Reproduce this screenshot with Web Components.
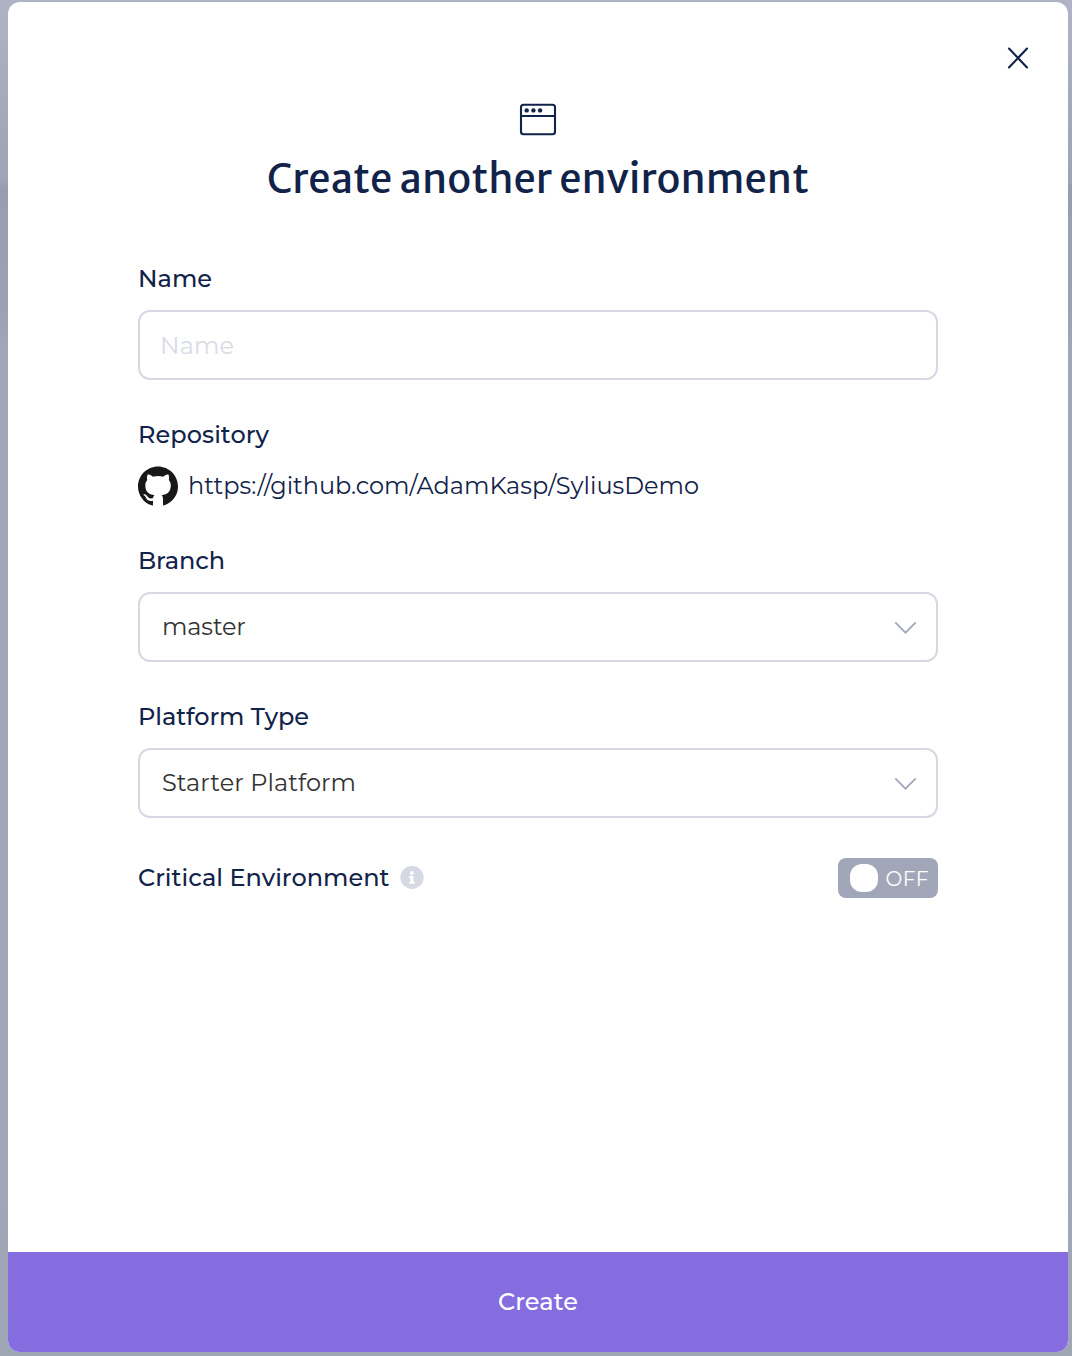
<!DOCTYPE html>
<html lang="en">
<head>
<meta charset="utf-8">
<title>Create another environment</title>
<style>
html,body{margin:0;height:100%;overflow:hidden}
body{font-family:Montserrat,Inter,"Liberation Sans",sans-serif;color:#12234a;font-size:24px}
</style>
</head>
<body>
<env-modal>
  <env-header><fit-text slot="title" width="542">Create another environment</fit-text></env-header>
  <env-form>
    <env-field><fit-text slot="label" width="74">Name</fit-text><env-input><fit-text width="74">Name</fit-text></env-input></env-field>
    <env-field><fit-text slot="label" width="131">Repository</fit-text><env-repo><fit-text width="511">https://github.com/AdamKasp/SyliusDemo</fit-text></env-repo></env-field>
    <env-field><fit-text slot="label" width="87">Branch</fit-text><env-select><fit-text width="84">master</fit-text></env-select></env-field>
    <env-field><fit-text slot="label" width="171">Platform Type</fit-text><env-select><fit-text width="194">Starter Platform</fit-text></env-select></env-field>
    <env-toggle-row><fit-text slot="label" width="251.5">Critical Environment</fit-text><env-toggle slot="control"><fit-text width="43">OFF</fit-text></env-toggle></env-toggle-row>
  </env-form>
  <env-submit slot="footer"><fit-text width="80">Create</fit-text></env-submit>
</env-modal>
<script>
const define = (name, html, ready) => customElements.define(name, class extends HTMLElement {
  constructor() {
    super();
    this.attachShadow({mode: 'open'}).innerHTML = html;
  }
  connectedCallback() { if (ready) ready(this); }
});

define('env-modal', `<style>
:host{box-sizing:border-box;display:block;width:1072px;height:1356px;padding:2px 4px 4px 8px;
background:linear-gradient(180deg,#b0b3c3 0,#a6abbb 90px,#9ea3b5 182px,#989eb0 186px,#9ca1b3 320px,#a1a6b8 350px,#a1a6b8 1180px,#9fa6b4 100%)}
.card{display:flex;flex-direction:column;height:1350px;border-radius:12px;background:#fff;overflow:hidden}
.body{flex:1}
</style><div class="card"><div class="body"><slot></slot></div><slot name="footer"></slot></div>`);

define('env-header', `<style>
:host{display:flex;flex-direction:column;align-items:center}
.close{align-self:flex-end;display:block;margin:44px 38px 0 0}
.win{display:block;margin-top:32px}
h1{margin:17px 0 0;font:500 40px/52px "Merriweather Sans","Open Sans","Noto Sans",sans-serif;white-space:nowrap}
</style>
<svg class="close" width="24" height="24" viewBox="0 0 24 24" fill="none" stroke="#12234a" stroke-width="2.1" stroke-linecap="round"><path d="M3 2.5 21 21.5M21 2.5 3 21.5"/></svg>
<svg class="win" width="38" height="34" viewBox="0 0 38 34" fill="none" stroke="#12234a" stroke-width="2.1"><rect x="2" y="2.8" width="34" height="29.4" rx="2.5"/><path d="M2 14h34"/><g fill="#12234a" stroke="none"><circle cx="7.7" cy="8.4" r="2.2"/><circle cx="14.4" cy="8.4" r="2.2"/><circle cx="21.1" cy="8.4" r="2.2"/></g></svg>
<h1><slot name="title"></slot></h1>`);

define('env-form', `<style>
:host{display:flex;flex-direction:column;gap:40px;width:800px;margin:59px auto 0}
</style><slot></slot>`);

define('env-field', `<style>
:host{display:flex;flex-direction:column;gap:16px}
label{height:30px;line-height:30px;font-weight:500}
</style><label><slot name="label"></slot></label><slot></slot>`);

define('env-input', `<style>
:host{box-sizing:border-box;display:flex;align-items:center;height:70px;padding:1px 20px 0;border:2px solid #d6d8e3;border-radius:12px;color:#d9dbe5;font-weight:400}
</style><slot></slot>`);

define('env-select', `<style>
:host{box-sizing:border-box;display:flex;align-items:center;justify-content:space-between;height:70px;padding:0 18px 0 22px;border:2px solid #d6d8e3;border-radius:12px;color:#333;font-weight:400}
span{padding-bottom:2px}
svg{display:block}
</style><span><slot></slot></span><svg width="25" height="16" viewBox="0 0 25 16" fill="none" stroke="#a1a6b8" stroke-width="1.7"><path d="M2.3 3.3 12.5 13.7 22.7 3.3"/></svg>`);

define('env-repo', `<style>
:host{display:flex;align-items:center;gap:10px;height:40px;font-weight:400}
span{padding-bottom:2px}
svg{display:block;flex:none}
</style><svg width="40" height="40" viewBox="0 -.15 16 16" fill="#191717"><path d="M8 0C3.58 0 0 3.58 0 8c0 3.54 2.29 6.53 5.47 7.59.4.07.55-.17.55-.38 0-.19-.01-.82-.01-1.49-2.01.37-2.53-.49-2.69-.94-.09-.23-.48-.94-.82-1.13-.28-.15-.68-.52-.01-.53.63-.01 1.08.58 1.23.82.72 1.21 1.87.87 2.33.66.07-.52.28-.87.51-1.07-1.78-.2-3.64-.89-3.64-3.95 0-.87.31-1.59.82-2.15-.08-.2-.36-1.02.08-2.12 0 0 .67-.21 2.2.82.64-.18 1.32-.27 2-.27s1.36.09 2 .27c1.53-1.04 2.2-.82 2.2-.82.44 1.1.16 1.92.08 2.12.51.56.82 1.27.82 2.15 0 3.07-1.87 3.75-3.65 3.95.29.25.54.73.54 1.48 0 1.07-.01 1.93-.01 2.2 0 .21.15.46.55.38A8.01 8.01 0 0 0 16 8c0-4.42-3.58-8-8-8z"/></svg><span><slot></slot></span>`);

define('env-toggle-row', `<style>
:host{display:flex;align-items:center;justify-content:space-between;height:40px}
.label{display:flex;align-items:center;gap:10px;font-weight:500}
span{padding-bottom:2px}
svg{display:block}
</style><div class="label"><span><slot name="label"></slot></span><svg width="24" height="24" viewBox="0 0 24 24"><circle cx="12" cy="11.4" r="11.6" fill="#d6d8e3"/><circle cx="11.9" cy="6.9" r="2" fill="#fff"/><path fill="#fff" d="M9.2 9.9h4.2v5.6h1.2v2.2H9.2v-2.2h1.2v-3.4H9.2z"/></svg></div><slot name="control"></slot>`);

define('env-toggle', `<style>
:host{box-sizing:border-box;display:flex;align-items:center;gap:7.5px;width:100px;height:40px;padding-left:12px;border-radius:8px;background:#a1a6b8;color:#fff;font-size:20px;font-weight:400}
i{width:28px;height:28px;border-radius:12px;background:#fff}
span{padding-top:1px}
</style><i></i><span><slot></slot></span>`);

define('env-submit', `<style>
:host{box-sizing:border-box;display:flex;align-items:center;justify-content:center;height:100px;padding-bottom:2px;background:#856ddf;color:#fff;font-weight:500}
</style><slot></slot>`);

// Tracks a line of text out (or in) so that it fills the given width.
define('fit-text', `<style>
:host{display:inline-block;white-space:nowrap}
</style><slot></slot>`, el => {
  const target = +el.getAttribute('width'), n = el.textContent.length;
  const natural = el.getBoundingClientRect().width;
  const gap = (target - natural) / (n - 1);
  el.style.letterSpacing = gap + 'px';
  el.style.marginRight = -gap + 'px';
});
</script>
</body>
</html>
